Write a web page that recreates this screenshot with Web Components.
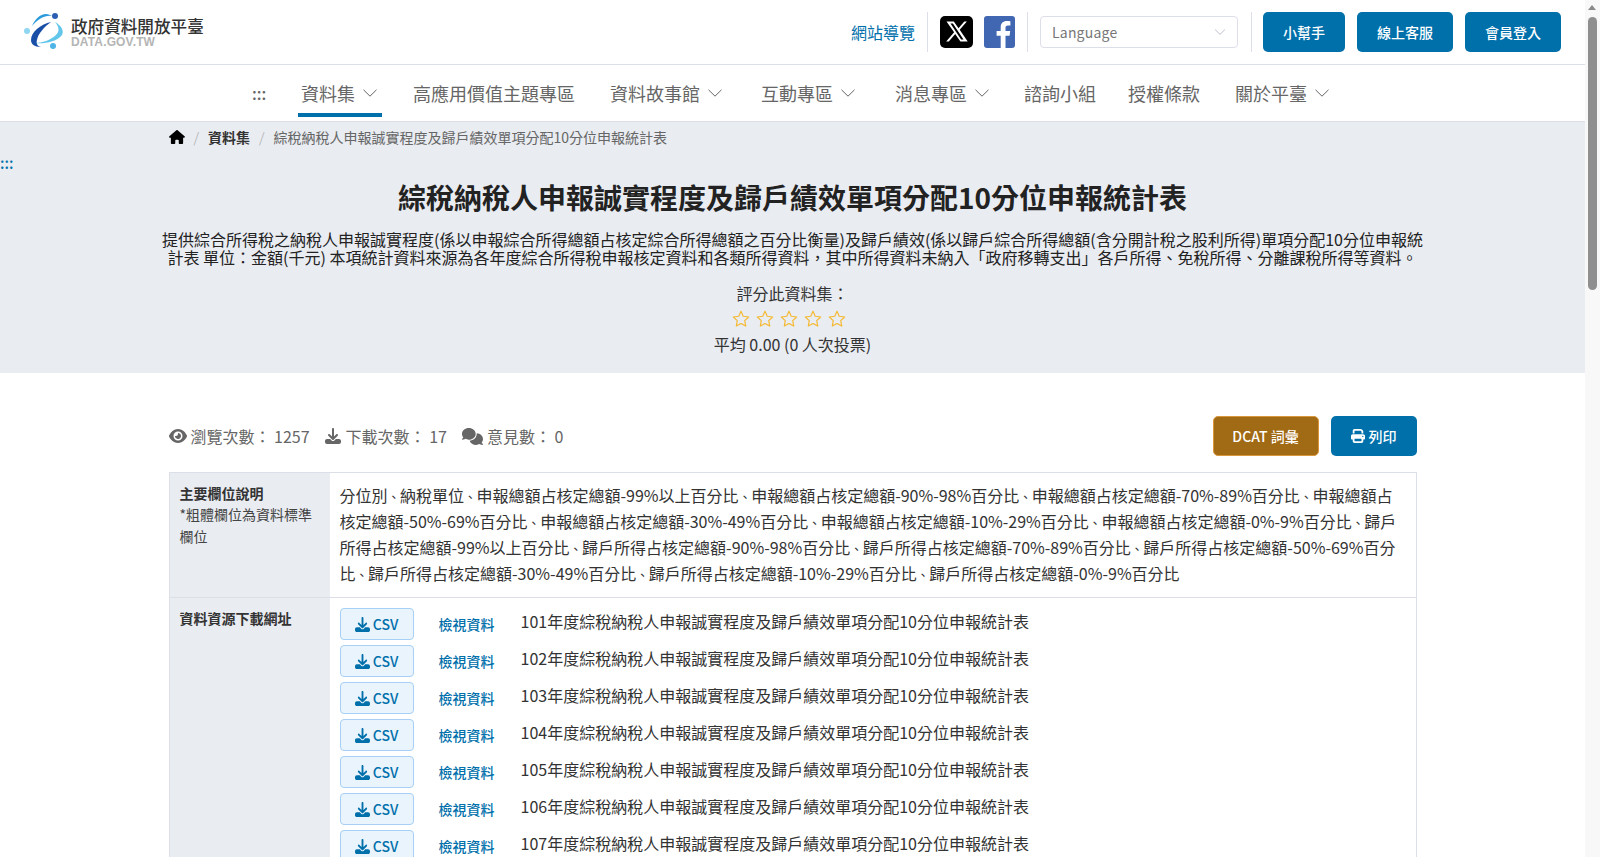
<!DOCTYPE html>
<html lang="zh-Hant"><head><meta charset="utf-8"><title>資料集</title>
<style>
html,body{margin:0;padding:0;height:857px;overflow:hidden;background:#fff}
body{font-family:"Noto Sans CJK TC","Noto Sans",sans-serif;color:#333}
</style></head><body>
<gov-page></gov-page>
<script>
const ic={
 dl:'<svg viewBox="0 0 512 512" width="W" height="W" fill="currentColor"><path d="M288 32c0-17.700-14.300-32-32-32s-32 14.300-32 32V274.700l-73.400-73.400c-12.500-12.500-32.800-12.500-45.300 0s-12.500 32.800 0 45.300l128 128c12.500 12.500 32.800 12.500 45.300 0l128-128c12.500-12.500 12.500-32.800 0-45.300s-32.800-12.500-45.300 0L288 274.700V32zM64 352c-35.300 0-64 28.700-64 64v32c0 35.300 28.700 64 64 64H448c35.300 0 64-28.700 64-64V416c0-35.300-28.700-64-64-64H346.500l-45.300 45.300c-25 25-65.500 25-90.500 0L165.500 352H64z"/></svg>',
 chev:'<svg viewBox="0 0 16 16" width="16" height="16" fill="none" stroke="#666" stroke-width="1"><path d="M1.500 4.800 8 11.200l6.500-6.400"/></svg>'
};
function def(name,html){customElements.define(name,class extends HTMLElement{constructor(){super();this.attachShadow({mode:'open'}).innerHTML=html;}});}

def('nav-item',`<style>:host{display:flex;align-items:center;height:100%;padding:0 4px 0 3px;gap:7px;font-size:18px;color:#666;position:relative;white-space:nowrap}
:host([active])::after{content:"";position:absolute;left:0;right:0;bottom:4px;height:4px;background:#0070ab}
.c{display:none}:host([drop]) .c{display:block}</style><slot></slot><span class="c">${ic.chev}</span>`);

def('blue-btn',`<style>:host{display:flex;align-items:center;justify-content:center;height:40px;border-radius:5px;background:#0070ab;color:#fff;font-size:14px;font-weight:500;box-sizing:border-box;gap:4px;white-space:nowrap}</style><slot></slot>`);

def('top-bar',`<style>:host{display:flex;align-items:center;height:64px;border-bottom:1px solid #dcdfe8;box-sizing:content-box;padding:0 24px 0 24px}
.logo{display:flex;align-items:center;gap:7px;margin-right:auto}
.t1{font-size:16.6px;line-height:20px;color:#333;font-weight:500;display:block;margin-top:-1px}
.t2{font-family:"Liberation Sans",sans-serif;font-weight:700;font-size:12px;letter-spacing:.15px;line-height:12px;color:#b5b5b5;display:block}
.sep{width:1px;height:40px;background:#dcdfe8}
a{color:#0070ab;font-size:16px;text-decoration:none;white-space:nowrap;margin-right:12px}
.so{display:block;margin-left:11px}
.sel{display:flex;align-items:center;justify-content:space-between;width:198px;height:32px;box-sizing:border-box;border:1px solid #dcdfe8;border-radius:4px;padding:0 11px;margin:0 13px 0 12px;font-size:14px;color:#777;letter-spacing:.2px}
</style>
<div class="logo"><svg width="40" height="38" viewBox="0 0 40 38">
<path d="M11 30C20 31 33 29 38 22C40 18 38 13 31 9C35 14 36 18 32 22C27 27 18 30 11 30z" fill="#62c6ea"/>
<path d="M8 13C11 6 16 1 22 1C24 1 27 2 28 3C21 2 14 6 8 13z" fill="#2b9bdc"/>
<path d="M27 9C17 11 7 19 7 27C7 31 10 34 17 34C13 33 12 30 13 27C14 21 20 14 27 9z" fill="#1a4fa8"/>
<circle cx="31" cy="3" r="3" fill="#2c5fb3"/><circle cx="3" cy="18" r="3" fill="#8fd6f2"/><circle cx="29" cy="33" r="3" fill="#4fb4e6"/>
</svg><div><span class="t1">政府資料開放平臺</span><span class="t2">DATA.GOV.TW</span></div></div>
<a href="#">網站導覽</a><span class="sep"></span>
<svg class="so" style="margin-left:12px" width="33" height="32" viewBox="0 0 33 32"><rect width="33" height="32" rx="5" fill="#000"/><path d="M6.500 5.500h7.300l4.700 6.700 5.800-6.700h2.600l-7.200 8.300 8 11.700h-7.300l-5.200-7.500-6.400 7.500H6.200l7.900-9.200zM10.500 7.500l10.600 16h2.400L12.900 7.500z" fill="#fff"/></svg>
<svg class="so" style="margin-right:12px" width="31" height="32" viewBox="0 0 31 32"><rect width="31" height="32" rx="3" fill="#4267b2"/><path d="M21.500 32V19.800h4.100l.6-4.900h-4.700v-3c0-1.400.4-2.400 2.400-2.400h2.500V5.200c-.4-.1-1.900-.2-3.600-.2-3.600 0-6.100 2.200-6.100 6.300v3.600h-4.100v4.900h4.100V32z" fill="#fff"/></svg>
<span class="sep"></span>
<div class="sel"><span>Language</span>${ic.chev.replace(/"16"/g,'"12"').replace('#666','#aab')}</div>
<span class="sep" style="margin-right:11px"></span>
<blue-btn style="width:82px;margin-right:12px">小幫手</blue-btn><blue-btn style="width:96px;margin-right:12px">線上客服</blue-btn><blue-btn style="width:96px">會員登入</blue-btn>`);

def('main-nav',`<style>:host{display:flex;justify-content:flex-start;height:56px;border-bottom:1px solid #dcdfe8;padding-left:252px}
.dots{font-size:16px;color:#666;align-self:center;width:14px;margin-right:32px;font-weight:500}</style>
<span class="dots">:::</span>
<nav-item active drop>資料集</nav-item><nav-item style="margin-left:28px">高應用價值主題專區</nav-item><nav-item drop style="margin-left:28px">資料故事館</nav-item><nav-item drop style="margin-left:31px">互動專區</nav-item><nav-item drop style="margin-left:32px">消息專區</nav-item><nav-item style="margin-left:27px">諮詢小組</nav-item><nav-item style="margin-left:25px">授權條款</nav-item><nav-item drop style="margin-left:28px">關於平臺</nav-item>`);

def('hero-band',`<style>:host{display:block;background:#e9ecf1;height:251px;position:relative;box-sizing:border-box;padding-top:5px;text-align:center}
.skip{position:absolute;left:0;top:30px;color:#0070ab;font-size:15px;line-height:22px;font-weight:500}
.crumb{display:flex;align-items:center;gap:9px;width:1248px;margin:0 auto;font-size:14px;line-height:20px;color:#666}
.crumb b{color:#333;font-weight:700}.crumb i{color:#aaa;font-style:normal;font-weight:300}
h1{font-size:28px;line-height:40px;margin:30px 0 0;color:#222;font-weight:700}
p{margin:13px 0 0;font-size:16px;line-height:18.400px;color:#222}
.rate{margin-top:14px;font-size:16px;line-height:24px;color:#333}
.stars{display:flex;justify-content:center;gap:6px;height:24px;align-items:center;margin-top:2px;padding-right:7px}
.avg{font-size:16px;line-height:24px;color:#333;margin-top:1px}</style>
<div class="skip">:::</div>
<div class="crumb"><svg width="16" height="14" viewBox="0 0 576 512" fill="#000"><path d="M575.800 255.500c0 18-15 32.100-32 32.100h-32l.7 160.200c0 2.700-.2 5.400-.5 8.100V472c0 22.100-17.900 40-40 40H456c-1.100 0-2.200 0-3.300-.1-1.400.1-2.800.1-4.200.1H416 392c-22.100 0-40-17.900-40-40V448 384c0-17.700-14.300-32-32-32H256c-17.700 0-32 14.300-32 32v64 24c0 22.100-17.900 40-40 40H160 128.100c-1.500 0-3-.1-4.500-.2-1.200.1-2.400.2-3.600.2H104c-22.100 0-40-17.900-40-40V360c0-.9 0-1.900.1-2.800V287.600H32c-18 0-32-14-32-32.100 0-9 3-17 10-24L266.400 8c7-7 15-8 22-8s15 2 21 7L564.800 231.500c8 7 12 15 11 24z"/></svg><i>/</i><b>資料集</b><i>/</i><span>綜稅納稅人申報誠實程度及歸戶績效單項分配10分位申報統計表</span></div>
<h1>綜稅納稅人申報誠實程度及歸戶績效單項分配10分位申報統計表</h1>
<p>提供綜合所得稅之納稅人申報誠實程度(係以申報綜合所得總額占核定綜合所得總額之百分比衡量)及歸戶績效(係以歸戶綜合所得總額(含分開計稅之股利所得)單項分配10分位申報統<br>計表 單位：金額(千元) 本項統計資料來源為各年度綜合所得稅申報核定資料和各類所得資料，其中所得資料未納入「政府移轉支出」各戶所得、免稅所得、分離課稅所得等資料。</p>
<div class="rate">評分此資料集：</div>
<div class="stars">${'<svg width="18" height="18" viewBox="0 0 16 16" fill="none" stroke="#f5b82e" stroke-width="1" stroke-linejoin="round"><path d="M8 1.200l2 4.400 4.800.6-3.500 3.300.9 4.800L8 12l-4.200 2.300.9-4.800L1.200 6.200 6 5.600z"/></svg>'.repeat(5)}</div>
<div class="avg">平均 0.00 (0 人次投票)</div>`);

def('stat-row',`<style>:host{display:flex;align-items:center;height:40px;font-size:16px;color:#666;white-space:nowrap}
.s{display:flex;align-items:center;gap:4px;margin-right:15px}
.r{margin-left:auto;display:flex;gap:12px}
svg{display:block}
.dcat{background:#a16a14;border:1px solid #d9963a}</style>
<div class="s"><svg width="18" height="16" viewBox="0 0 576 512" fill="#666"><path d="M288 32c-80.800 0-145.500 36.800-192.600 80.600C48.600 156 17.300 208 2.500 243.700c-3.300 7.900-3.300 16.700 0 24.600C17.300 304 48.600 356 95.400 399.400 142.500 443.200 207.200 480 288 480s145.500-36.800 192.600-80.600c46.800-43.500 78.100-95.400 93-131.100 3.300-7.900 3.300-16.700 0-24.600-14.900-35.700-46.200-87.700-93-131.100C433.500 68.800 368.800 32 288 32zM144 256a144 144 0 1 1 288 0 144 144 0 1 1-288 0zm144-64c0 35.300-28.700 64-64 64-7.100 0-13.900-1.200-20.300-3.300-5.500-1.800-11.900 1.600-11.700 7.400.3 6.900 1.300 13.800 3.200 20.700 13.700 51.200 66.400 81.600 117.600 67.900s81.600-66.400 67.900-117.600c-11.100-41.500-47.800-69.400-88.600-71.100-5.800-.2-9.200 6.100-7.400 11.700 2.100 6.400 3.300 13.200 3.300 20.300z"/></svg><span>瀏覽次數： 1257</span></div>
<div class="s" style="gap:5px">${ic.dl.replace(/"W"/g,'"16"')}<span>下載次數： 17</span></div>
<div class="s" style="gap:4px;margin-right:14px"><svg width="21" height="17" viewBox="0 0 640 512" fill="#666"><path d="M208 352c114.900 0 208-78.800 208-176S322.900 0 208 0S0 78.800 0 176c0 38.600 14.700 74.300 39.600 103.400c-3.500 9.400-8.700 17.700-14.200 24.700c-4.800 6.200-9.700 11-13.300 14.300c-1.800 1.600-3.300 2.900-4.300 3.700c-.5 .4-.9 .7-1.100 .8l-.2 .2 0 0 0 0C1 327.200-1.400 334.400 .8 340.900S9.100 352 16 352c21.800 0 43.800-5.600 62.100-12.500c9.200-3.500 17.800-7.400 25.300-11.400C134.100 343.300 169.800 352 208 352zM448 176c0 112.300-99.100 196.900-216.500 207C255.800 457.400 336.400 512 432 512c38.200 0 73.900-8.700 104.700-23.900c7.500 4 16 7.900 25.200 11.400c18.300 6.900 40.300 12.500 62.100 12.500c6.900 0 13.100-4.500 15.200-11.100c2.100-6.600-.2-13.800-5.800-17.900l0 0 0 0-.2-.2c-.2-.2-.6-.4-1.100-.8c-1-.8-2.500-2-4.300-3.700c-3.600-3.300-8.500-8.100-13.300-14.300c-5.500-7-10.700-15.400-14.200-24.700c24.900-29 39.600-64.700 39.600-103.400c0-92.800-84.900-168.900-192.600-175.500c.4 5.100 .6 10.300 .6 15.500z"/></svg><span>意見數： 0</span></div>
<div class="r"><blue-btn class="dcat" style="width:106px">DCAT 詞彙</blue-btn><blue-btn style="width:86px"><svg width="14" height="14" viewBox="0 0 512 512" fill="#fff"><path d="M128 0C92.700 0 64 28.700 64 64v96h64V64H354.700L384 93.300V160h64V93.300c0-17-6.700-33.300-18.700-45.300L400 18.700C388 6.700 371.700 0 354.700 0H128zM384 352v32 64H128V384 368 352H384zm64 32h32c17.700 0 32-14.300 32-32V256c0-35.300-28.700-64-64-64H64c-35.300 0-64 28.700-64 64v96c0 17.700 14.300 32 32 32H64v64c0 35.300 28.700 64 64 64H384c35.300 0 64-28.700 64-64V384zM432 248a24 24 0 1 1 0 48 24 24 0 1 1 0-48z"/></svg>列印</blue-btn></div>`);

def('res-row',`<style>:host{display:flex;align-items:flex-start;height:37px;white-space:nowrap;font-size:16px;color:#333}
.b{display:flex;align-items:center;justify-content:center;gap:3px;width:74px;height:32px;box-sizing:border-box;background:#eaf4fd;border:1px solid #a6d0f5;border-radius:4px;color:#0070ab;font-size:14px;font-weight:500}
a{color:#0070ab;font-size:14px;font-weight:500;text-decoration:none;margin:-1px 26px 0 25px;line-height:34px}
span{line-height:26px}</style>
<div class="b">${ic.dl.replace(/"W"/g,'"15"')}CSV</div><a href="#">檢視資料</a><span><slot></slot></span>`);

const fields='分位別、納稅單位、申報總額占核定總額-99%以上百分比、申報總額占核定總額-90%-98%百分比、申報總額占核定總額-70%-89%百分比、申報總額占核定總額-50%-69%百分比、申報總額占核定總額-30%-49%百分比、申報總額占核定總額-10%-29%百分比、申報總額占核定總額-0%-9%百分比、歸戶所得占核定總額-99%以上百分比、歸戶所得占核定總額-90%-98%百分比、歸戶所得占核定總額-70%-89%百分比、歸戶所得占核定總額-50%-69%百分比、歸戶所得占核定總額-30%-49%百分比、歸戶所得占核定總額-10%-29%百分比、歸戶所得占核定總額-0%-9%百分比'.replace(/、/g,'<span class="cm">、</span>');
def('info-table',`<style>:host{display:grid;grid-template-columns:160px 1fr;border:1px solid #dcdfe8;border-bottom:0;margin-top:16px}
.h{background:#e9ecf1;padding:10px;font-size:14px;line-height:21.400px;color:#444;border-bottom:1px solid #dcdfe8}
.h b{font-weight:700;color:#333}
.c{padding:10px;font-size:16px;line-height:24px;color:#333;border-bottom:1px solid #dcdfe8;min-width:0}
.cm{font-size:12.500px}</style>
<div class="h"><b>主要欄位說明</b><br>*粗體欄位為資料標準欄位</div>
<div class="c">${fields}</div>
<div class="h"><b>資料資源下載網址</b></div>
<div class="c">${[101,102,103,104,105,106,107].map(y=>`<res-row>${y}年度綜稅納稅人申報誠實程度及歸戶績效單項分配10分位申報統計表</res-row>`).join('')}</div>`);

def('fake-scroll',`<style>:host{position:absolute;top:0;right:0;width:15px;height:857px;background:#f8f8f8;display:block}
.u{position:absolute;left:3px;top:5px;width:0;height:0;border:4.500px solid transparent;border-top:0;border-bottom:5px solid #8a8a8a}
.t{position:absolute;left:3px;right:3px;top:17px;height:273px;border-radius:5px;background:#8f8f8f}</style><div class="u"></div><div class="t"></div>`);

def('gov-page',`<style>:host{display:block;position:relative;width:1600px;height:857px;overflow:hidden;padding-right:15px;box-sizing:border-box}
.wrap{width:1248px;margin:0 auto;padding-top:43px}</style>
<top-bar></top-bar><main-nav></main-nav><hero-band></hero-band>
<div class="wrap"><stat-row></stat-row><info-table></info-table></div><fake-scroll></fake-scroll>`);
</script></body></html>
